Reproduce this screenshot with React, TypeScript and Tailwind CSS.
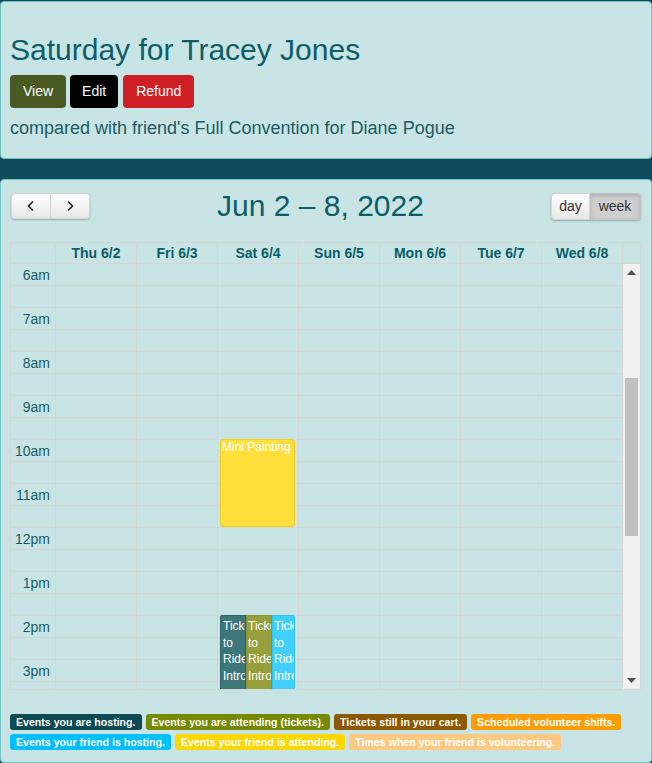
import React from "react";

const days = ["Thu 6/2", "Fri 6/3", "Sat 6/4", "Sun 6/5", "Mon 6/6", "Tue 6/7", "Wed 6/8"];
const hours = ["6am", "7am", "8am", "9am", "10am", "11am", "12pm", "1pm", "2pm", "3pm", "4pm"];

const legend = [
    [
        { label: "Events you are hosting.", cls: "bg-[#0d4a54]" },
        { label: "Events you are attending (tickets).", cls: "bg-[#778900]" },
        { label: "Tickets still in your cart.", cls: "bg-[#8c5800]" },
        { label: "Scheduled volunteer shifts.", cls: "bg-[#ff9d00]" },
    ],
    [
        { label: "Events your friend is hosting.", cls: "bg-[#00bfff]" },
        { label: "Events your friend is attending.", cls: "bg-[#ffd700]" },
        { label: "Times when your friend is volunteering.", cls: "bg-[#ffc982]" },
    ],
];

function Chevron({ dir }: { dir: "l" | "r" }) {
    return (
        <svg width="10" height="12" viewBox="0 0 10 12" fill="none" stroke="#222" strokeWidth="1.6">
            {dir === "l" ? <polyline points="7,1.5 2.5,6 7,10.5" /> : <polyline points="3,1.5 7.5,6 3,10.5" />}
        </svg>
    );
}

function App() {
    return (
        <div className="min-h-screen bg-[#0e4c5c] pt-px font-['Liberation_Sans',Arial,sans-serif]">
            <div className="bg-[#c8e4e5] border border-[#6fbfc3] rounded-[4px] px-[9px] pt-[32px] pb-[17px]">
                <h1 className="text-[30px] leading-[31px] text-[#0d5e68] mb-[10px]">Saturday for Tracey Jones</h1>
                <div className="flex gap-1">
                    <div className="h-[33px] px-[13px] flex items-center rounded-[4px] bg-[#4a5a24] text-white text-[14px]">View</div>
                    <div className="h-[33px] px-[12px] flex items-center rounded-[4px] bg-black text-white text-[14px]">Edit</div>
                    <div className="h-[33px] px-[13px] flex items-center rounded-[4px] bg-[#cf1f26] text-white text-[14px] ml-px">Refund</div>
                </div>
                <p className="mt-[7px] text-[18px] leading-[26px] text-[#1b5b66]">compared with friend's Full Convention for Diane Pogue</p>
            </div>

            <div className="mt-[20px] bg-[#c8e4e5] border border-[#6fc6c9] rounded-[4px] pl-[9px] pr-[10px] pt-[11px] pb-[12px]">
                <div className="flex items-center justify-between h-[30px] mb-[21px]">
                    <div className="flex ml-px rounded-[4px] shadow-[0_1px_2px_rgba(0,0,0,0.25)]">
                        <div className="w-[40px] h-[26px] flex items-center justify-center bg-gradient-to-b from-[#ffffff] to-[#e8e8e8] border border-[#d4d4d4] rounded-l-[4px]">
                            <Chevron dir="l" />
                        </div>
                        <div className="w-[39px] h-[26px] flex items-center justify-center bg-gradient-to-b from-[#ffffff] to-[#e8e8e8] border border-l-0 border-[#d4d4d4] rounded-r-[4px]">
                            <Chevron dir="r" />
                        </div>
                    </div>
                    <h2 className="text-[30px] leading-[34px] text-[#0d5e68]">Jun 2 – 8, 2022</h2>
                    <div className="flex rounded-[4px] shadow-[0_1px_2px_rgba(0,0,0,0.25)] text-[14px] text-[#333]">
                        <div className="w-[39px] h-[27px] flex items-center justify-center bg-gradient-to-b from-[#ffffff] to-[#e8e8e8] border border-[#d4d4d4] rounded-l-[4px]">day</div>
                        <div className="w-[51px] h-[27px] flex items-center justify-center bg-[#cfcfcf] border border-l-0 border-[#c4c4c4] rounded-r-[4px] shadow-[inset_0_2px_4px_rgba(0,0,0,0.15)]">week</div>
                    </div>
                </div>

                <div className="border border-[#d6d6d6]">
                    <div className="flex border-b border-[#d6d6d6] h-[21px]">
                        <div className="w-[45px] border-r border-[#d6d6d6]" />
                        <div className="flex-1 grid grid-cols-7">
                            {days.map((d) => (
                                <div key={d} className="border-r border-[#d6d6d6] text-center text-[14px] leading-[20px] font-bold text-[#0d5e68]">{d}</div>
                            ))}
                        </div>
                        <div className="w-[17px]" />
                    </div>
                    <div className="flex h-[425px]">
                        <div className="relative flex-1 overflow-hidden">
                            {hours.map((h) => (
                                <React.Fragment key={h}>
                                    <div className="flex h-[22px] border-b border-[#d6d6d6]">
                                        <div className="w-[45px] border-r border-[#d6d6d6] pr-[5px] text-right text-[14px] leading-[22px] text-[#1b5b66]">{h}</div>
                                    </div>
                                    <div className="flex h-[22px] border-b border-[#d6d6d6]">
                                        <div className="w-[45px] border-r border-[#d6d6d6]" />
                                    </div>
                                </React.Fragment>
                            ))}
                            <div className="absolute inset-y-0 left-[45px] right-0 grid grid-cols-7">
                                {days.map((d, i) => (
                                    <div key={d} className="relative border-r border-[#d6d6d6]">
                                        {i === 2 && (
                                            <>
                                                <div className="absolute top-[175px] left-[2px] right-[3px] h-[88px] bg-[#ffdf3c] border border-[#f3cf22] rounded-[3px] text-white text-[12px] leading-[14px] px-px overflow-hidden">
                                                    Mini Painting
                                                </div>
                                                <div className="absolute top-[351px] left-[2px] right-[3px] h-[100px] flex rounded-t-[3px] overflow-hidden text-white text-[12px] leading-[16.5px]">
                                                    <div className="w-[26px] bg-[#3e7779] border border-[#2f6668] pl-[2px] pt-[2px] overflow-hidden">Ticket to Ride Intro</div>
                                                    <div className="w-[26px] bg-[#979f3c] border border-[#8a9230] pl-px pt-[2px] overflow-hidden">Ticket to Ride Intro</div>
                                                    <div className="flex-1 bg-[#40cfff] border border-[#2cc4f5] pl-px pt-[2px] overflow-hidden">Ticket to Ride Intro</div>
                                                </div>
                                            </>
                                        )}
                                    </div>
                                ))}
                            </div>
                        </div>
                        <div className="w-[17px] bg-[#f1f1f1] flex flex-col items-center py-[6px]">
                            <svg width="9" height="5" viewBox="0 0 9 5"><polygon points="4.5,0 9,5 0,5" fill="#505050" /></svg>
                            <div className="w-[13px] h-[158px] bg-[#c1c1c1] mt-[103px]" />
                            <div className="flex-1" />
                            <svg width="9" height="5" viewBox="0 0 9 5"><polygon points="0,0 9,0 4.5,5" fill="#505050" /></svg>
                        </div>
                    </div>
                </div>

                <div className="mt-[24px] flex flex-col gap-[4px]">
                    {legend.map((row, r) => (
                        <div key={r} className="flex gap-[4px]">
                            {row.map((b) => (
                                <span key={b.label} className={`${b.cls} shrink-0 whitespace-nowrap text-white font-bold text-[10.6px] leading-[16px] px-[6px] rounded-[3px]`}>{b.label}</span>
                            ))}
                        </div>
                    ))}
                </div>
            </div>
        </div>
    );
}

export default App;
